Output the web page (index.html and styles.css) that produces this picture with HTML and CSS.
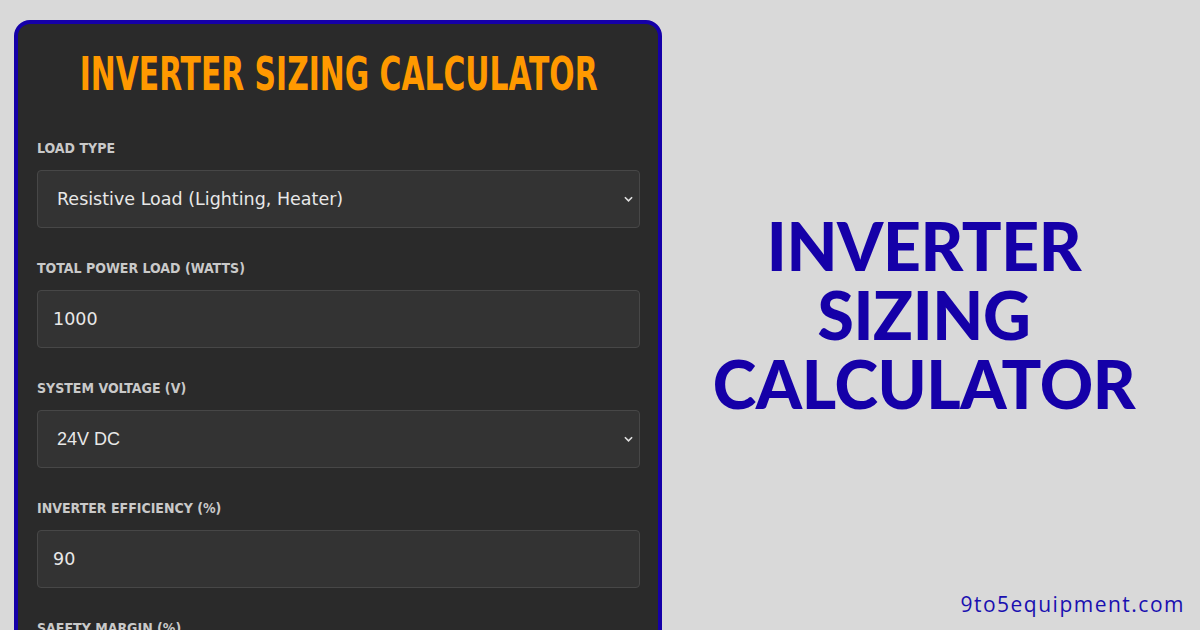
FILE: index.html
```html
<!DOCTYPE html>
<html>
<head>
<meta charset="utf-8">
<link rel="stylesheet" href="styles.css">
</head>
<body>
<div class="page">
  <div class="card">
    <h1 class="card-title"><span class="card-title-text">INVERTER SIZING CALCULATOR</span></h1>
    <div class="field">
      <div class="label">LOAD TYPE</div>
      <div class="control select"><span class="val poppins">Resistive Load (Lighting, Heater)</span><svg class="chev" viewBox="0 0 10 6" width="9" height="6"><path d="M1 1l4 4 4-4" fill="none" stroke="#e0e0e0" stroke-width="1.8"/></svg></div>
    </div>
    <div class="field">
      <div class="label">TOTAL POWER LOAD (WATTS)</div>
      <div class="control input"><span class="val poppins">1000</span></div>
    </div>
    <div class="field">
      <div class="label">SYSTEM VOLTAGE (V)</div>
      <div class="control select"><span class="val arial">24V DC</span><svg class="chev" viewBox="0 0 10 6" width="9" height="6"><path d="M1 1l4 4 4-4" fill="none" stroke="#e0e0e0" stroke-width="1.8"/></svg></div>
    </div>
    <div class="field">
      <div class="label">INVERTER EFFICIENCY (%)</div>
      <div class="control input"><span class="val poppins">90</span></div>
    </div>
    <div class="field">
      <div class="label">SAFETY MARGIN (%)</div>
      <div class="control input"><span class="val poppins">25</span></div>
    </div>
  </div>
  <div class="side">
    <div class="big-title">INVERTER<br>SIZING<br>CALCULATOR</div>
    <div class="site">9to5equipment.com</div>
  </div>
</div>
</body>
</html>
```
FILE: styles.css
```css
html, body {
  margin: 0;
  padding: 0;
}
body {
  background: #d9d9d9;
  width: 1200px;
  height: 630px;
  overflow: hidden;
}
.page {
  display: flex;
  height: 630px;
}
.card {
  margin: 20px 0 0 14px;
  width: 648px;
  box-sizing: border-box;
  background: #2a2a2a;
  border: 4px solid #1500a8;
  border-radius: 16px;
  padding: 0 18px 0 19px;
  height: 700px;
  flex: none;
}
.card-title {
  margin: 24px 0 38px;
  display: flex;
  justify-content: center;
  white-space: nowrap;
  font-family: "DejaVu Sans Condensed", "DejaVu Sans", sans-serif;
  font-weight: bold;
  font-size: 46px;
  line-height: 54px;
  color: #ff9900;
}
.card-title-text {
  flex: none;
  display: block;
  transform: scaleX(0.72);
  position: relative;
  top: -1px;
}
.field {
  margin-bottom: 32px;
}
.label {
  font-family: "DejaVu Sans Condensed", "DejaVu Sans", sans-serif;
  font-weight: bold;
  font-size: 14px;
  line-height: 16px;
  color: #c9c9c9;
  margin-bottom: 14px;
}
.control {
  height: 58px;
  box-sizing: border-box;
  background: #333333;
  border: 1px solid #474747;
  border-radius: 4px;
  display: flex;
  align-items: center;
  justify-content: space-between;
  color: #e8e8e8;
}
.select {
  padding: 0 6px 0 19px;
}
.input {
  padding: 0 15px;
}
.val {
  font-size: 17.5px;
}
.poppins {
  font-family: "DejaVu Sans", sans-serif;
}
.arial {
  font-family: "Liberation Sans", Arial, sans-serif;
  font-size: 18px;
}
.chev {
  display: block;
}
.side {
  flex: 1;
  position: relative;
}
.big-title {
  margin-top: 211px;
  text-align: center;
  font-family: Lato, sans-serif;
  font-weight: 900;
  font-size: 66px;
  line-height: 69px;
  letter-spacing: -0.4px;
  color: #1500a8;
  padding-right: 14px;
}
.site {
  position: absolute;
  right: 15px;
  bottom: 12px;
  font-family: "Open Sans", sans-serif;
  font-size: 21px;
  color: #1a10b0;
  letter-spacing: 1.5px;
}
```
